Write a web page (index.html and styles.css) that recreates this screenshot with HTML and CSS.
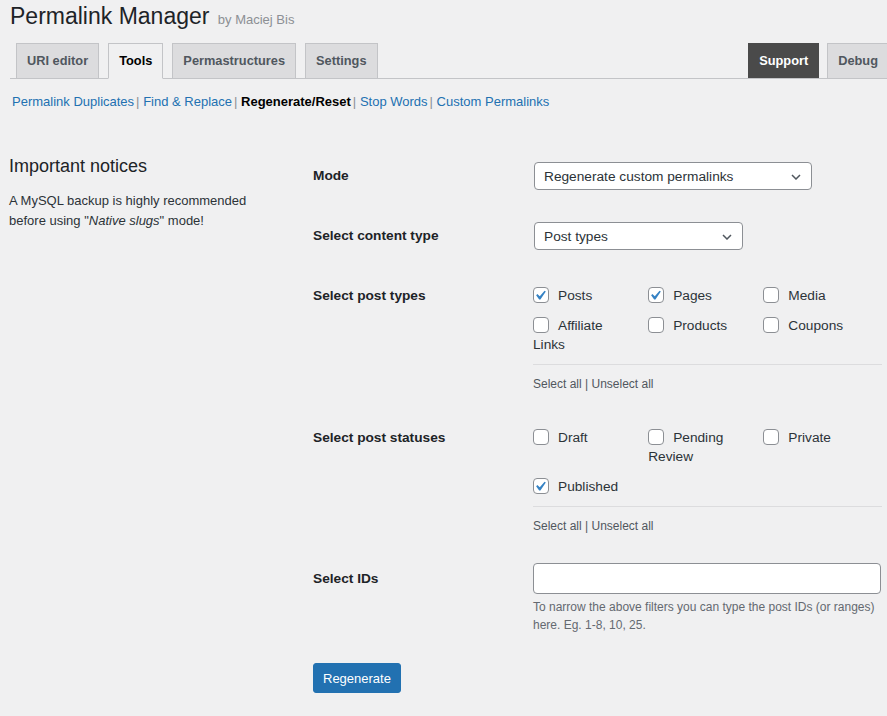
FILE: index.html
```html
<!DOCTYPE html>
<html lang="en">
<head>
<meta charset="utf-8">
<title>Permalink Manager</title>
<link rel="stylesheet" href="styles.css">
</head>
<body>
<div class="wrap">
  <h1 class="title">Permalink Manager <small class="by">by Maciej Bis</small></h1>

  <nav class="tabs">
    <div class="tab-group">
      <a class="tab">URI editor</a>
      <a class="tab tab-active">Tools</a>
      <a class="tab">Permastructures</a>
      <a class="tab">Settings</a>
    </div>
    <div class="tab-group tab-group-right">
      <a class="tab tab-dark">Support</a>
      <a class="tab">Debug</a>
    </div>
  </nav>

  <div class="subsub">
    <a class="sublink">Permalink Duplicates</a><span class="sep">|</span>
    <a class="sublink">Find &amp; Replace</a><span class="sep">|</span>
    <span class="current">Regenerate/Reset</span><span class="sep">|</span>
    <a class="sublink">Stop Words</a><span class="sep">|</span>
    <a class="sublink">Custom Permalinks</a>
  </div>

  <div class="content">
    <aside class="sidebar">
      <h2 class="side-title">Important notices</h2>
      <p class="side-text">A MySQL backup is highly recommended before using "<em>Native slugs</em>" mode!</p>
    </aside>

    <form class="form">
      <div class="row row-mode">
        <div class="label label-28">Mode</div>
        <div class="field">
          <div class="select select-mode"><span>Regenerate custom permalinks</span>
            <svg class="chev" width="10" height="6" viewBox="0 0 10 6"><polyline points="1,1 5,5 9,1" fill="none" stroke="#50575e" stroke-width="1.5"/></svg>
          </div>
        </div>
      </div>

      <div class="row row-type">
        <div class="label label-28">Select content type</div>
        <div class="field">
          <div class="select select-type"><span>Post types</span>
            <svg class="chev" width="10" height="6" viewBox="0 0 10 6"><polyline points="1,1 5,5 9,1" fill="none" stroke="#50575e" stroke-width="1.5"/></svg>
          </div>
        </div>
      </div>

      <div class="row row-posttypes">
        <div class="label label-19">Select post types</div>
        <div class="field">
          <div class="checks">
            <label class="check"><span class="box"><svg width="14" height="14" viewBox="3.5 2 15 15"><path d="M14.83 4.89l1.34.94-5.81 8.38H9.02L5.78 9.67l1.34-1.25 2.57 2.4z" fill="#3582c4"/></svg></span>Posts</label>
            <label class="check"><span class="box"><svg width="14" height="14" viewBox="3.5 2 15 15"><path d="M14.83 4.89l1.34.94-5.81 8.38H9.02L5.78 9.67l1.34-1.25 2.57 2.4z" fill="#3582c4"/></svg></span>Pages</label>
            <label class="check"><span class="box"></span>Media</label>
            <label class="check"><span class="box"></span>Affiliate Links</label>
            <label class="check"><span class="box"></span>Products</label>
            <label class="check"><span class="box"></span>Coupons</label>
          </div>
          <div class="select-all">Select all | Unselect all</div>
        </div>
      </div>

      <div class="row row-statuses">
        <div class="label label-19">Select post statuses</div>
        <div class="field">
          <div class="checks">
            <label class="check"><span class="box"></span>Draft</label>
            <label class="check"><span class="box"></span>Pending Review</label>
            <label class="check"><span class="box"></span>Private</label>
            <label class="check"><span class="box"><svg width="14" height="14" viewBox="3.5 2 15 15"><path d="M14.83 4.89l1.34.94-5.81 8.38H9.02L5.78 9.67l1.34-1.25 2.57 2.4z" fill="#3582c4"/></svg></span>Published</label>
          </div>
          <div class="select-all">Select all | Unselect all</div>
        </div>
      </div>

      <div class="row row-ids">
        <div class="label label-31">Select IDs</div>
        <div class="field">
          <input class="text-input" type="text">
          <p class="description">To narrow the above filters you can type the post IDs (or ranges) here. Eg. 1-8, 10, 25.</p>
        </div>
      </div>

      <div class="submit-row">
        <button class="button-primary" type="button">Regenerate</button>
      </div>
    </form>
  </div>
</div>
</body>
</html>
```

FILE: styles.css
```css
html {
  overflow: hidden;
}

body {
  margin: 0;
  background: #f0f0f1;
  font-family: "Liberation Sans", Arial, sans-serif;
  font-size: 13px;
  color: #3c434a;
}

.wrap {
  padding: 0 0 0 10px;
}

.title {
  margin: 0;
  padding-top: 1px;
  height: 30px;
  font-size: 23px;
  line-height: 30px;
  font-weight: 400;
  color: #1d2327;
}

.by {
  font-size: 13px;
  line-height: 1;
  color: #8c8f94;
  margin-left: 2px;
}

/* Tabs */
.tabs {
  margin-top: 12px;
  display: flex;
  align-items: flex-end;
  border-bottom: 1px solid #c3c4c7;
  padding-left: 6px;
  margin-right: -2px;
}

.tab-group {
  display: flex;
  align-items: flex-end;
  gap: 9px;
}

.tab-group-right {
  margin-left: auto;
  gap: 8px;
}

.tab {
  display: block;
  padding: 5px 10px;
  height: 24px;
  line-height: 24px;
  font-size: 12.8px;
  font-weight: 700;
  color: #50575e;
  background: #dcdcde;
  border: 1px solid #c3c4c7;
  border-bottom: none;
}

.tab-active {
  background: #f0f0f1;
  color: #000;
  border-bottom: 1px solid #f0f0f1;
  margin-bottom: -1px;
}

.tab-dark {
  background: #4a4a4a;
  border-color: #4a4a4a;
  color: #fff;
}

/* Sub navigation */
.subsub {
  margin-top: 13px;
  padding-left: 2px;
  line-height: 20px;
  font-size: 13px;
}

.sublink {
  color: #2271b1;
}

.current {
  color: #000;
  font-weight: 700;
}

.sep {
  color: #8c8f94;
  margin-left: 2px;
}

/* Content */
.content {
  margin-top: 42px;
  display: flex;
}

.sidebar {
  width: 303px;
  flex: none;
  padding-left: 0;
}

.side-title {
  margin: 0 0 0 -1px;
  font-size: 18px;
  line-height: 24px;
  font-weight: 400;
  color: #1d2327;
}

.side-text {
  margin: 13px 0 0 -1px;
  max-width: 262px;
  line-height: 20px;
  color: #2c3338;
}

.form {
  flex: 1;
  padding-top: 8px;
}

.row {
  display: grid;
  grid-template-columns: 220px 349px;
}

.row-type {
  margin-top: 32px;
}

.row-posttypes {
  margin-top: 36px;
}

.row-statuses {
  margin-top: 35px;
}

.row-ids {
  margin-top: 28px;
}

.label {
  font-size: 13.7px;
  font-weight: 700;
  color: #1d2327;
}

.label-28 { line-height: 28px; }
.label-19 { line-height: 19px; }
.label-31 { line-height: 31px; }

.select {
  box-sizing: border-box;
  height: 28px;
  margin-left: 1px;
  display: flex;
  align-items: center;
  justify-content: space-between;
  padding: 0 10px 0 9px;
  background: #fff;
  border: 1px solid #8c8f94;
  border-radius: 4px;
  font-size: 13.7px;
  color: #2c3338;
}

.select-mode { width: 278px; }
.select-type { width: 209px; }

.chev {
  display: block;
  margin-top: 1px;
}

/* Checkboxes */
.checks {
  display: flex;
  flex-wrap: wrap;
  row-gap: 11px;
}

.check {
  box-sizing: border-box;
  width: 33%;
  padding-right: 15px;
  font-size: 13.7px;
  line-height: 19px;
  color: #2c3338;
}

.box {
  box-sizing: border-box;
  display: inline-flex;
  align-items: center;
  justify-content: center;
  width: 16px;
  height: 16px;
  margin-right: 9px;
  vertical-align: middle;
  margin-top: -3px;
  background: #fff;
  border: 1px solid #8c8f94;
  border-radius: 4px;
}

.box svg {
  display: block;
}

.select-all {
  margin-top: 10px;
  border-top: 1px solid #dcdcde;
  padding-top: 10px;
  font-size: 12px;
  line-height: 18px;
  color: #50575e;
}

/* IDs */
.text-input {
  display: block;
  box-sizing: border-box;
  width: 348px;
  height: 31px;
  margin: 0;
  background: #fff;
  border: 1px solid #8c8f94;
  border-radius: 4px;
}

.description {
  margin: 4px 0 0;
  font-size: 12px;
  line-height: 18px;
  color: #646970;
}

.submit-row {
  margin-top: 29px;
}

.button-primary {
  display: block;
  height: 30px;
  padding: 0 9px;
  margin: 0;
  background: #2271b1;
  border: 1px solid #2271b1;
  border-radius: 3px;
  color: #fff;
  font-family: "Liberation Sans", Arial, sans-serif;
  font-size: 13px;
}
```
